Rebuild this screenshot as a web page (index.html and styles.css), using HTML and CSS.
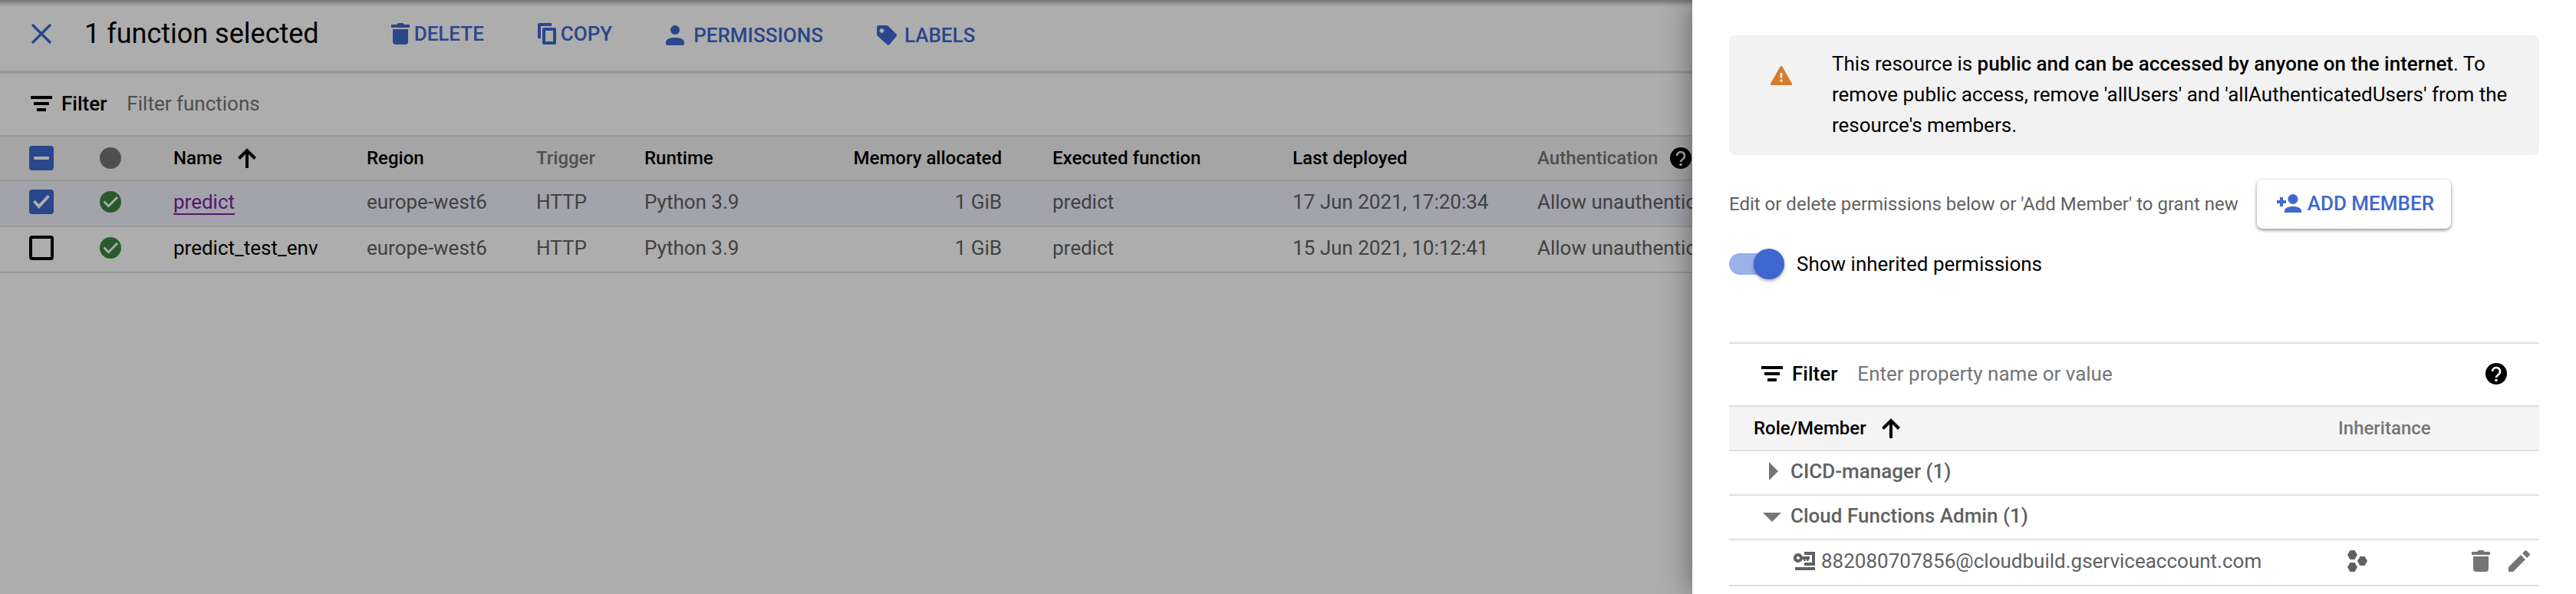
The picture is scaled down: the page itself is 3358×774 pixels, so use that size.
FILE: index.html
```html
<!DOCTYPE html>
<html lang="en">
<head>
<meta charset="utf-8">
<title>Cloud Functions</title>
<link rel="stylesheet" href="styles.css">
</head>
<body>
<div class="app">
  <main class="page">
    <header class="toolbar">
      <button class="icon-btn" aria-label="Clear selection"><svg class="i28" viewBox="0 0 28 28"><path d="M2 2l24 24M26 2L2 26" fill="none" stroke="currentColor" stroke-width="3.4"/></svg></button>
      <h1 class="title">1 function selected</h1>
      <div class="actions">
        <button class="action tight"><svg class="i-trash" viewBox="0 0 24 28"><path d="M0 2h7l2-2h6l2 2h7v4H0zM2 8h20v16q0 4-4 4H6q-4 0-4-4z"/></svg>Delete</button>
        <button class="action tight"><svg class="i-trash" viewBox="0 0 24 28"><path d="M0 20V2q0-2 2-2h16v4H4v16zM8 6h14q2 0 2 2v18q0 2-2 2H8q-2 0-2-2V8q0-2 2-2zm2 4v14h10V10z" fill-rule="evenodd"/></svg>Copy</button>
        <button class="action"><svg class="i-person" viewBox="0 0 24 26"><circle cx="12" cy="6" r="6"/><path d="M0 24v-2c0-4 6-6 12-6s12 2 12 6v2q0 2-2 2H2q-2 0-2-2z"/></svg>Permissions</button>
        <button class="action near"><svg class="i-tag" viewBox="0 0 26 26"><path d="M3 0h9q2 0 3 1l10 10q2 2 0 4L16.500 25q-1.500 1.500-3 0L1 14q-1-1-1-3V3q0-3 3-3zm3.500 4a3 3 0 1 0 .01 0z" fill-rule="evenodd"/></svg>Labels</button>
      </div>
    </header>
    <div class="filter">
      <svg class="i-filter" viewBox="0 0 28 20"><path d="M0 0h28v4H0zM4 8h20v4H4zM8 16h12v4H8z"/></svg>
      <label for="filter-functions">Filter</label>
      <input id="filter-functions" type="text" placeholder="Filter functions">
    </div>
    <table class="functions">
      <colgroup><col class="c-check"><col class="c-status"><col class="c-name"><col class="c-region"><col class="c-trigger"><col class="c-runtime"><col class="c-memory"><col class="c-exec"><col class="c-date"><col></colgroup>
      <thead>
        <tr>
          <th><input class="box mixed" type="checkbox" aria-label="Select all"></th>
          <th><span class="dot"></span></th>
          <th><span class="sort">Name<svg class="i-arrow" viewBox="0 0 24 26"><path d="M12 26V3M1.500 13.500L12 3l10.500 10.500" fill="none" stroke="currentColor" stroke-width="4"/></svg></span></th>
          <th>Region</th>
          <th class="muted">Trigger</th>
          <th>Runtime</th>
          <th class="num">Memory allocated</th>
          <th>Executed function</th>
          <th>Last deployed</th>
          <th class="muted"><span class="hint">Authentication<svg class="i28 dark" viewBox="0 0 28 28"><circle cx="14" cy="14" r="14"/><path d="M9 11a5 5 0 1 1 8 4c-2 1.500-3 2.500-3 4" fill="none" stroke="#f2f2f2" stroke-width="2.600"/><circle cx="14" cy="22.500" r="1.800" fill="#f2f2f2"/></svg></span></th>
        </tr>
      </thead>
      <tbody>
        <tr class="selected">
          <td><input class="box" type="checkbox" checked aria-label="Select predict"></td>
          <td><svg class="i28 ok" viewBox="0 0 28 28"><circle cx="14" cy="14" r="14"/><path d="M5.500 13.500l6 6L23 8" fill="none" stroke="#fff" stroke-width="2.800"/></svg></td>
          <td><a class="link" href="#predict">predict</a></td>
          <td>europe-west6</td><td>HTTP</td><td>Python 3.9</td><td class="num">1 GiB</td><td>predict</td><td>17 Jun 2021, 17:20:34</td><td>Allow unauthenticated</td>
        </tr>
        <tr>
          <td><input class="box" type="checkbox" aria-label="Select predict_test_env"></td>
          <td><svg class="i28 ok" viewBox="0 0 28 28"><circle cx="14" cy="14" r="14"/><path d="M5.500 13.500l6 6L23 8" fill="none" stroke="#fff" stroke-width="2.800"/></svg></td>
          <td class="strong">predict_test_env</td>
          <td>europe-west6</td><td>HTTP</td><td>Python 3.9</td><td class="num">1 GiB</td><td>predict</td><td>15 Jun 2021, 10:12:41</td><td>Allow unauthenticated</td>
        </tr>
      </tbody>
    </table>
    <div class="scrim"></div>
  </main>
  <aside class="panel">
    <div class="alert">
      <svg class="i-warn" viewBox="0 0 28 25"><path d="M14 0q1 0 1.500 1L28 23q.500 2-1.500 2h-25Q-.500 25 0 23L12.500 1Q13 0 14 0zM12.500 9v6.500h3V9zm0 8.500v3h3v-3z" fill-rule="evenodd"/></svg>
      <p>This resource is <strong>public and can be accessed by anyone on the internet</strong>. To remove public access, remove 'allUsers' and 'allAuthenticatedUsers' from the resource's members.</p>
    </div>
    <div class="add-row">
      <span>Edit or delete permissions below or 'Add Member' to grant new</span>
      <button class="add"><svg class="i-add" viewBox="0 0 32 24"><path d="M4 4h4v4h4v4H8v4H4v-4H0V8h4z"/><circle cx="21" cy="6.500" r="6.500"/><path d="M10 24v-2c0-4 5-6 11-6s11 2 11 6v2z"/></svg>Add member</button>
    </div>
    <label class="switch"><input type="checkbox" checked><span>Show inherited permissions</span></label>
    <div class="filter boxed">
      <svg class="i-filter" viewBox="0 0 28 20"><path d="M0 0h28v4H0zM4 8h20v4H4zM8 16h12v4H8z"/></svg>
      <label for="filter-members">Filter</label>
      <input id="filter-members" type="text" placeholder="Enter property name or value">
      <button class="icon-btn dark" aria-label="Help"><svg class="i28" viewBox="0 0 28 28"><circle cx="14" cy="14" r="14"/><path d="M9 11a5 5 0 1 1 8 4c-2 1.500-3 2.500-3 4" fill="none" stroke="#fff" stroke-width="2.600"/><circle cx="14" cy="22.500" r="1.800" fill="#fff"/></svg></button>
    </div>
    <table class="members">
      <colgroup><col><col class="c-inherit"><col class="c-tools"></colgroup>
      <thead>
        <tr>
          <th class="role"><span class="sort">Role/Member<svg class="i-arrow" viewBox="0 0 24 26"><path d="M12 26V3M1.500 13.500L12 3l10.500 10.500" fill="none" stroke="currentColor" stroke-width="4"/></svg></span></th>
          <th class="muted">Inheritance</th>
          <th></th>
        </tr>
      </thead>
      <tbody>
        <tr><td class="group"><button class="toggle"><svg class="i-tri" viewBox="0 0 24 24"><path d="M8 0l12 12L8 24z"/></svg>CICD-manager (1)</button></td><td></td><td></td></tr>
        <tr><td class="group"><button class="toggle"><svg class="i-tri" viewBox="0 0 24 24"><path d="M0 8h24L12 20z"/></svg>Cloud Functions Admin (1)</button></td><td></td><td></td></tr>
        <tr class="member">
          <td><span class="account"><svg class="i-key" viewBox="0 0 28 24"><path d="M14 0h14v18H14v-4h10V4H14zM2 20h26v4H2z"/><path d="M6 2a6 6 0 1 0 5.500 8H13v2h2.500v-2H17v2h2.500v-2H21V6h-9.500A6 6 0 0 0 6 2zm0 4a2 2 0 1 1-.01 0z" fill-rule="evenodd"/></svg>882080707856@cloudbuild.gserviceaccount.com</span></td>
          <td><svg class="i-hex" viewBox="0 0 26 28"><path d="M3.500 0h6L13 6l-3.500 6h-6L0 6zM3.500 16h6l3.500 6-3.500 6h-6L0 22zM16.500 8h6l3.500 6-3.500 6h-6L13 14z"/></svg></td>
          <td><span class="tools"><button class="icon-btn soft" aria-label="Delete member"><svg class="i-trash" viewBox="0 0 24 28"><path d="M0 2h7l2-2h6l2 2h7v4H0zM2 8h20v16q0 4-4 4H6q-4 0-4-4z"/></svg></button><button class="icon-btn soft" aria-label="Edit member"><svg class="i28" viewBox="0 0 28 28"><path d="M0 28v-6L16 6l6 6L6 28zM18 4l3.500-3.500q1-1 2 0l4 4q1 1 0 2L24 10z"/></svg></button></span></td>
        </tr>
      </tbody>
    </table>
  </aside>
</div>
</body>
</html>
```
FILE: styles.css
```css
* { box-sizing: border-box; }
body { margin: 0; font-family: Roboto, "Liberation Sans", sans-serif; font-size: 26px; color: #000; background: #fff; }
.app { display: flex; min-height: 100vh; }
svg { display: block; flex: none; fill: currentColor; }
button { font: inherit; border: 0; padding: 0; background: none; color: inherit; display: flex; align-items: center; cursor: pointer; }

.page { position: relative; flex: 1; min-width: 0; overflow: hidden; }
.scrim { position: absolute; inset: 0; background: rgba(0, 0, 0, .32); pointer-events: none; box-shadow: inset 0 10px 6px -6px rgba(0, 0, 0, .35); }

.toolbar { display: flex; align-items: center; height: 96px; padding: 0 40px 4px; border-bottom: 4px solid #e0e0e0; color: #3e68cf; }
.title { margin: 0 94px 0 42px; font-size: 36px; font-weight: 400; color: #000; }
.actions { display: flex; align-items: center; gap: 70px; padding-top: 4px; }
.action { gap: 12px; font-weight: 500; text-transform: uppercase; }
.near { gap: 10px; }
.tight { gap: 6px; padding-bottom: 4px; }

.filter { display: flex; align-items: center; height: 82px; padding: 0 40px 2px; border-bottom: 2px solid #e0e0e0; }
.filter label { margin: 0 26px 0 12px; font-weight: 500; }
.filter input { flex: 1; min-width: 0; border: 0; padding: 0; outline: 0; background: none; font: inherit; }
.filter input::placeholder { color: #757575; opacity: 1; }

table { width: 100%; border-collapse: separate; border-spacing: 0; table-layout: fixed; }
th, td { padding: 0; text-align: left; white-space: nowrap; border-bottom: 2px solid #e0e0e0; color: #616161; }
th { height: 58px; font-size: 24px; font-weight: 500; color: #000; background: #f4f4f4; }
td { height: 60px; padding-bottom: 4px; }
.num { text-align: right; padding-right: 66px; }
.muted { color: #757575; }
.strong { color: #000; }
.selected td { background: #f0f1fc; }
.functions td:first-child, .functions th:first-child { padding-left: 38px; }
.c-check { width: 130px; }
.c-status { width: 96px; }
.c-name { width: 252px; }
.c-region { width: 221px; }
.c-trigger { width: 141px; }
.c-runtime { width: 232px; }
.c-memory { width: 300px; }
.c-exec { width: 313px; }
.c-date { width: 319px; }
.sort { display: flex; align-items: center; gap: 20px; }
.hint { display: flex; align-items: center; gap: 16px; }
.link { color: #7b1fa2; text-decoration: none; border-bottom: 2px solid; }
.dot { display: block; width: 28px; height: 28px; border-radius: 50%; background: #757575; }
.ok { color: #3f8540; }
.dark { color: #000; }

.box { appearance: none; display: grid; place-items: center; width: 32px; height: 32px; margin: 0; border: 4px solid #000; border-radius: 4px; }
.box:checked, .box.mixed { border-color: #3e68cf; background: #3e68cf; }
.box:checked::after { content: ""; width: 22px; height: 18px; background: #fff; clip-path: polygon(0 52%, 12% 38%, 35% 67%, 87% 0, 100% 14%, 35% 100%); }
.box.mixed::after { content: ""; width: 20px; height: 4px; background: #fff; border-radius: 1px; }

.panel { position: relative; flex: 0 0 1152px; padding: 46px 48px 0; background: #fff; box-shadow: 0 0 36px rgba(0, 0, 0, .45); }
.alert { display: flex; align-items: flex-start; padding: 17px 24px 19px 54px; border-radius: 8px; background: #f2f2f2; line-height: 40px; }
.alert p { margin: 0; }
.alert strong { font-weight: 500; }
.i-warn { width: 28px; height: 25px; margin: 23px 52px 0 0; color: #d67a2e; }
.add-row { display: flex; align-items: center; gap: 24px; margin-top: 32px; font-size: 24px; color: #616161; }
.add { height: 64px; padding: 0 22px 2px 26px; gap: 8px; border-radius: 8px; font-size: 26px; font-weight: 500; text-transform: uppercase; color: #3e68cf; background: #fff; box-shadow: 0 2px 4px rgba(0, 0, 0, .4), 0 0 6px rgba(0, 0, 0, .08); }
.switch { display: flex; align-items: center; gap: 16px; height: 40px; margin: 26px 0 82px; }
.switch input { appearance: none; display: flex; align-items: center; justify-content: flex-end; width: 72px; height: 28px; margin: 0; border-radius: 14px; background: #9ab0e8; }
.switch input::after { content: ""; width: 40px; height: 40px; border-radius: 50%; background: #3e68cf; box-shadow: 0 2px 4px rgba(0, 0, 0, .35); }
.boxed { height: 84px; border-top: 2px solid #e0e0e0; padding: 0 42px 2px; }

.members td { height: 58px; font-weight: 500; }
.members .role { padding-left: 32px; }
.members .group { padding-left: 44px; }
.members .member td { height: 60px; padding-left: 12px; font-weight: 400; }
.members .member td:first-child { padding-left: 84px; }
.toggle { gap: 12px; }
.account { display: flex; align-items: center; gap: 8px; }
.tools { display: flex; align-items: center; gap: 24px; }
.soft, .i-tri { color: #757575; }
.c-inherit { width: 162px; }
.c-tools { width: 100px; }

.i28 { width: 28px; height: 28px; }
.i-trash { width: 24px; height: 28px; }
.i-person { width: 24px; height: 26px; }
.i-tag { width: 26px; height: 26px; }
.i-filter { width: 28px; height: 20px; }
.i-arrow { width: 24px; height: 26px; }
.i-add { width: 32px; height: 24px; }
.i-tri { width: 24px; height: 24px; }
.i-key { width: 28px; height: 24px; }
.i-hex { width: 26px; height: 28px; }
```
